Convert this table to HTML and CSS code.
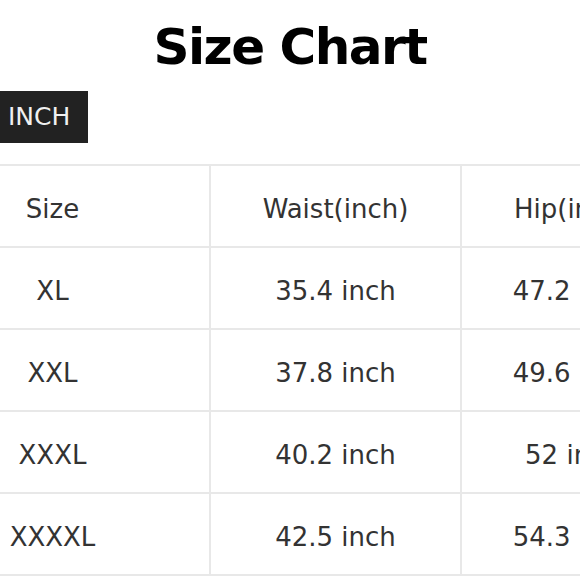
FILE: index.html
```html
<!DOCTYPE html>
<html>
<head>
<meta charset="utf-8">
<link rel="stylesheet" href="styles.css">
</head>
<body>
<div class="page">
  <h1 class="title">Size Chart</h1>
  <div class="unit">INCH</div>
  <div class="table-wrap">
    <table class="chart">
      <colgroup>
        <col class="c-size">
        <col class="c-waist">
        <col class="c-hip">
      </colgroup>
      <tr><td>Size</td><td>Waist(inch)</td><td>Hip(inch)</td></tr>
      <tr><td>XL</td><td>35.4 inch</td><td>47.2 inch</td></tr>
      <tr><td>XXL</td><td>37.8 inch</td><td>49.6 inch</td></tr>
      <tr><td>XXXL</td><td>40.2 inch</td><td>52 inch</td></tr>
      <tr><td>XXXXL</td><td>42.5 inch</td><td>54.3 inch</td></tr>
    </table>
  </div>
</div>
</body>
</html>
```

FILE: styles.css
```css
html, body {
  margin: 0;
  padding: 0;
  background: #ffffff;
  overflow: hidden;
}

.page {
  width: 580px;
  font-family: "DejaVu Sans", Verdana, sans-serif;
  color: #333333;
}

.title {
  margin: 18px 0 0;
  font-size: 50px;
  line-height: 58px;
  font-weight: bold;
  letter-spacing: -1.5px;
  text-align: center;
  color: #000000;
}

.unit {
  display: inline-block;
  margin-top: 15px;
  height: 52px;
  line-height: 52px;
  padding: 0 18px 0 8px;
  background: #222222;
  color: #f0f0f0;
  font-size: 25px;
}

.table-wrap {
  margin-top: 21px;
  width: 580px;
  overflow: hidden;
}

.chart {
  margin-left: -106px;
  border-collapse: collapse;
  table-layout: fixed;
  width: 790px;
}

.c-size { width: 315px; }
.c-waist { width: 251px; }
.c-hip { width: 224px; }

.chart td {
  border: 2px solid #e8e8e8;
  height: 74px;
  padding: 6px 0 0;
  text-align: center;
  vertical-align: middle;
  font-size: 26px;
  color: #333333;
  white-space: nowrap;
}
```
